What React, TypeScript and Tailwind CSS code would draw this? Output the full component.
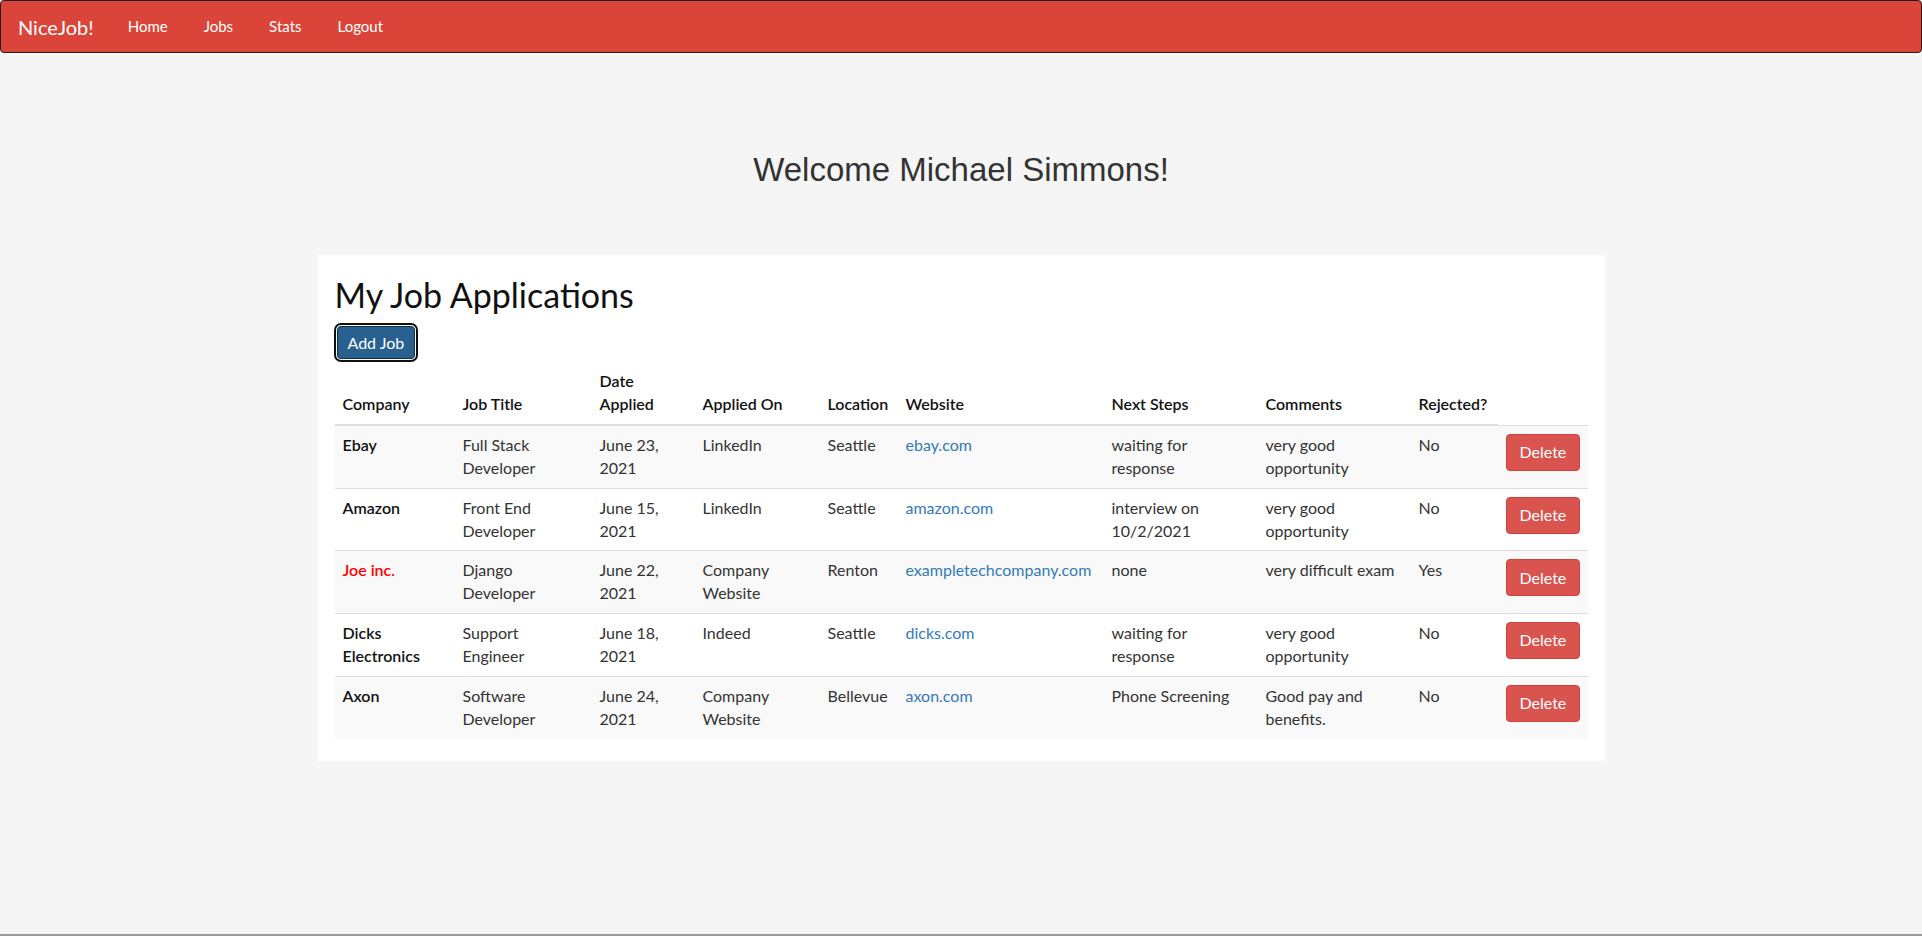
import React from "react";

interface Job {
  company: string;
  title: string;
  date: string;
  appliedOn: string;
  location: string;
  website: string;
  nextSteps: string;
  comments: string;
  rejected: string;
  highlight?: boolean;
}

const jobs: Job[] = [
  {
    company: "Ebay",
    title: "Full Stack Developer",
    date: "June 23, 2021",
    appliedOn: "LinkedIn",
    location: "Seattle",
    website: "ebay.com",
    nextSteps: "waiting for response",
    comments: "very good opportunity",
    rejected: "No",
  },
  {
    company: "Amazon",
    title: "Front End Developer",
    date: "June 15, 2021",
    appliedOn: "LinkedIn",
    location: "Seattle",
    website: "amazon.com",
    nextSteps: "interview on 10/2/2021",
    comments: "very good opportunity",
    rejected: "No",
  },
  {
    company: "Joe inc.",
    title: "Django Developer",
    date: "June 22, 2021",
    appliedOn: "Company Website",
    location: "Renton",
    website: "exampletechcompany.com",
    nextSteps: "none",
    comments: "very difficult exam",
    rejected: "Yes",
    highlight: true,
  },
  {
    company: "Dicks Electronics",
    title: "Support Engineer",
    date: "June 18, 2021",
    appliedOn: "Indeed",
    location: "Seattle",
    website: "dicks.com",
    nextSteps: "waiting for response",
    comments: "very good opportunity",
    rejected: "No",
  },
  {
    company: "Axon",
    title: "Software Developer",
    date: "June 24, 2021",
    appliedOn: "Company Website",
    location: "Bellevue",
    website: "axon.com",
    nextSteps: "Phone Screening",
    comments: "Good pay and benefits.",
    rejected: "No",
  },
];

const headers = [
  "Company",
  "Job Title",
  "Date Applied",
  "Applied On",
  "Location",
  "Website",
  "Next Steps",
  "Comments",
  "Rejected?",
];

const colWidths = [120, 137, 103, 125, 78, 206, 154, 153, 87, 90];

const Navbar: React.FC = () => (
  <nav className="flex h-[53px] items-center rounded-[4px] border border-[#1c1c1c] bg-[#db4539] pl-[17px] text-white">
    <span className="mr-[34px] text-[20px] leading-none">NiceJob!</span>
    <ul className="flex gap-[36px] text-[15px]">
      <li>Home</li>
      <li>Jobs</li>
      <li>Stats</li>
      <li>Logout</li>
    </ul>
  </nav>
);

export default function App() {
  return (
    <div
      className="min-h-[936px] border-b-2 border-[#9a9a9a] bg-[#f5f5f5] text-[#333]"
      style={{ fontFamily: "Lato, 'Open Sans', sans-serif" }}
    >
      <Navbar />

      <h1
        className="mt-[99px] text-center text-[33px] leading-[1.1] text-[#333]"
        style={{ fontFamily: "'Liberation Sans', Arial, sans-serif" }}
      >
        Welcome Michael Simmons!
      </h1>

      <section className="mx-auto mt-[67px] w-[1287px] bg-white px-[17px] pt-[21px] pb-[22px]">
        <h2 className="text-[34px] leading-[37px] text-[#111]">My Job Applications</h2>
        <button className="mt-[13px] ml-[2px] h-[33px] rounded-[4px] border border-[#122b40] bg-[#286090] px-[10px] text-[16px] text-white shadow-[0_0_0_1px_#fff,0_0_0_3px_#101010]">
          Add Job
        </button>

        <table className="mt-[3px] w-[1253px] table-fixed border-collapse text-[16px] leading-[22.86px]">
          <colgroup>
            {colWidths.map((w, i) => (
              <col key={i} style={{ width: w }} />
            ))}
          </colgroup>
          <thead>
            <tr>
              {headers.map((h) => (
                <th
                  key={h}
                  className="border-b-2 border-[#ddd] p-[8px] text-left align-bottom font-semibold text-[#111]"
                >
                  {h}
                </th>
              ))}
            </tr>
          </thead>
          <tbody>
            {jobs.map((job, i) => (
              <tr
                key={job.company}
                className={`border-t border-[#ddd] align-top ${i % 2 === 0 ? "bg-[#f9f9f9]" : "bg-white"}`}
              >
                <th
                  className={`p-[8px] text-left font-semibold ${job.highlight ? "text-[#f00] font-normal" : "text-[#111]"}`}
                >
                  {job.company}
                </th>
                <td className="p-[8px]">{job.title}</td>
                <td className="p-[8px]">{job.date}</td>
                <td className="p-[8px]">{job.appliedOn}</td>
                <td className="whitespace-nowrap p-[8px]">{job.location}</td>
                <td className="whitespace-nowrap p-[8px]">
                  <a className="text-[#337ab7]">{job.website}</a>
                </td>
                <td className="p-[8px]">{job.nextSteps}</td>
                <td className="p-[8px]">{job.comments}</td>
                <td className="p-[8px]">{job.rejected}</td>
                <td className="p-[8px]">
                  <button className="h-[37px] rounded-[4px] border border-[#d43f3a] bg-[#d9534f] px-[13px] text-[16px] text-white">
                    Delete
                  </button>
                </td>
              </tr>
            ))}
          </tbody>
        </table>
      </section>
    </div>
  );
}
